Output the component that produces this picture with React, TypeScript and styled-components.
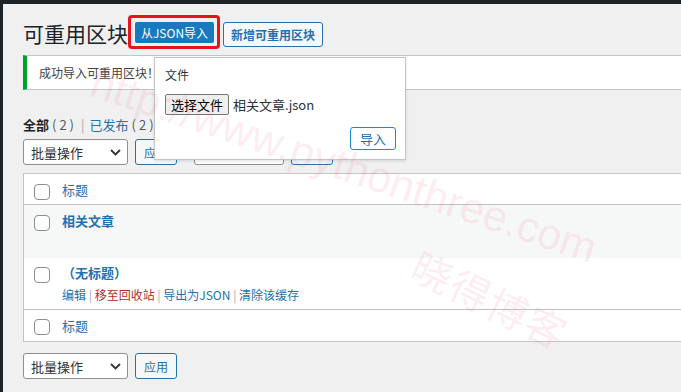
import styled, { createGlobalStyle } from "styled-components";

const GlobalStyle = createGlobalStyle`
  html, body {
    margin: 0;
    padding: 0;
    background: #f0f0f1;
    overflow: hidden;
  }
  body {
    font-family: "Noto Sans CJK SC", "Noto Sans", sans-serif;
    color: #1d2327;
    font-size: 12px;
  }
`;

const Screen = styled.div`
  position: relative;
  width: 681px;
  height: 392px;
  overflow: hidden;
  display: flex;
  flex-direction: column;
`;

const AdminBar = styled.div`
  height: 4px;
  flex: none;
  background: #1d2327;
`;

const Body = styled.div`
  display: flex;
  flex: 1;
`;

const SideStrip = styled.div`
  width: 3px;
  flex: none;
  background: #1d2327;
`;

const Main = styled.main`
  position: relative;
  flex: none;
  width: 740px;
  padding-left: 20px;
`;

const Heading = styled.div`
  display: flex;
  align-items: center;
  margin-top: 11px;
  height: 34px;
`;

const Title = styled.h1`
  margin: 0;
  font-size: 21px;
  font-weight: 400;
  line-height: 1;
  color: #1d2327;
  padding-top: 2px;
`;

const Highlight = styled.span`
  display: inline-flex;
  border: 3px solid #e8141b;
  border-radius: 4px;
  padding: 4px 3px 3px 4px;
`;

const PrimaryButton = styled.button`
  height: 21px;
  width: 79px;
  padding: 0;
  border: none;
  border-radius: 2px;
  background: #1878c0;
  color: #fff;
  font: inherit;
  font-size: 12px;
  line-height: 21px;
`;

const OutlineButton = styled.button<{ $small?: boolean }>`
  height: ${p => (p.$small ? 23 : 25)}px;
  padding: 0 ${p => (p.$small ? 9 : 7)}px;
  margin-top: ${p => (p.$small ? 0 : 5)}px;
  margin-left: ${p => (p.$small ? 0 : 3)}px;
  border: 1px solid ${p => (p.$small ? "#1a8ad0" : "#2271b1")};
  border-radius: 3px;
  background: ${p => (p.$small ? "#fff" : "#f6f7f7")};
  color: #2271b1;
  font: inherit;
  font-size: ${p => (p.$small ? 13 : 12)}px;
  font-weight: ${p => (p.$small ? 400 : 600)};
  line-height: 1;
`;

const Notice = styled.div`
  margin-top: 6px;
  height: 33px;
  display: flex;
  align-items: center;
  background: #fff;
  border: 1px solid #c3c4c7;
  border-left: 4px solid #00a32a;
  padding-left: 12px;
  font-size: 12px;
  color: #3c434a;
`;

const Filters = styled.div`
  margin-top: 24px;
  height: 20px;
  display: flex;
  align-items: center;
  font-size: 13px;
  color: #50575e;
`;

const FilterLink = styled.span<{ $current?: boolean }>`
  color: ${p => (p.$current ? "#1d2327" : "#2271b1")};
  font-weight: ${p => (p.$current ? 600 : 400)};
`;

const Count = styled.span`
  margin: 0 3px;
  letter-spacing: 3px;
`;

const Sep = styled.span`
  color: #a7aaad;
  margin: 0 5px 0 1px;
`;

const TableNav = styled.div<{ $bottom?: boolean }>`
  display: flex;
  gap: 7px;
  margin-top: ${p => (p.$bottom ? 11 : 5)}px;
  height: 26px;
`;

const Select = styled.div<{ $width: number }>`
  width: ${p => p.$width}px;
  box-sizing: border-box;
  height: 26px;
  border: 1px solid #8c8f94;
  border-radius: 3px;
  background: #fff;
  display: flex;
  align-items: center;
  justify-content: space-between;
  padding: 0 6px 0 7px;
  font-size: 13px;
  color: #2c3338;
`;

const ApplyButton = styled.button`
  box-sizing: border-box;
  width: 42px;
  height: 26px;
  border: 1px solid #2271b1;
  border-radius: 3px;
  background: #f6f7f7;
  color: #2271b1;
  font: inherit;
  font-size: 12px;
  padding: 0;
`;

const Group = styled.div`
  display: flex;
  gap: 7px;
  margin-left: 10px;
`;

const Table = styled.table`
  margin-top: 8px;
  width: 100%;
  border-collapse: collapse;
  background: #fff;
  border: 1px solid #c3c4c7;
`;

const Row = styled.tr<{ $alt?: boolean; $head?: boolean }>`
  background: ${p => (p.$alt ? "#f6f7f7" : "#fff")};
  border-bottom: ${p => (p.$head ? "1px solid #c3c4c7" : "none")};
  vertical-align: top;
`;

const CheckCell = styled.td<{ $top: number }>`
  width: 28px;
  padding: ${p => p.$top}px 0 0 10px;
`;

const TitleCell = styled.td<{ $h: number; $top: number }>`
  height: ${p => p.$h}px;
  box-sizing: border-box;
  padding: ${p => p.$top}px 0 0 0;
  font-size: 13px;
  line-height: 18px;
`;

const Checkbox = styled.span`
  display: block;
  width: 14px;
  height: 14px;
  border: 1px solid #8c8f94;
  border-radius: 4px;
  background: #fff;
`;

const ColLink = styled.span`
  color: #2271b1;
  font-size: 13px;
`;

const RowTitle = styled.span`
  color: #2271b1;
  font-weight: 700;
  font-size: 13px;
`;

const Actions = styled.div`
  margin-top: 5px;
  font-size: 12px;
  line-height: 16px;
  color: #a7aaad;
`;

const Action = styled.span<{ $danger?: boolean }>`
  color: ${p => (p.$danger ? "#b32d2e" : "#2271b1")};
`;

const Popup = styled.div`
  position: absolute;
  left: 151px;
  top: 53px;
  width: 252px;
  height: 103px;
  box-sizing: border-box;
  background: #fff;
  border: 1px solid #c3c4c7;
  box-shadow: 0 1px 3px rgba(0, 0, 0, 0.12);
  padding: 8px 9px 9px 10px;
  display: flex;
  flex-direction: column;
`;

const PopLabel = styled.div`
  font-size: 12px;
  line-height: 18px;
  color: #2c3338;
`;

const FileRow = styled.div`
  display: flex;
  align-items: center;
  gap: 4px;
  margin-top: 10px;
  font-size: 13px;
  color: #2c3338;
`;

const FileButton = styled.button`
  height: 21px;
  padding: 0 5px;
  border: 1px solid #767676;
  border-radius: 2px;
  background: #efefef;
  color: #000;
  font: inherit;
  font-size: 13px;
  line-height: 1;
`;

const PopFooter = styled.div`
  margin-top: auto;
  display: flex;
  justify-content: flex-end;
`;

const Watermark = styled.div<{ $left: number; $top: number; $angle: number; $cjk?: boolean }>`
  position: absolute;
  left: ${p => p.$left}px;
  top: ${p => p.$top}px;
  transform: rotate(${p => p.$angle}deg);
  transform-origin: left top;
  white-space: nowrap;
  pointer-events: none;
  font-family: ${p => (p.$cjk ? '"Noto Sans CJK SC", sans-serif' : '"Liberation Sans", sans-serif')};
  font-size: ${p => (p.$cjk ? 40 : 43)}px;
  letter-spacing: ${p => (p.$cjk ? 2 : 0)}px;
  color: rgba(238, 70, 100, 0.11);
`;

const Chevron = () => (
  <svg width="11" height="7" viewBox="0 0 11 7">
    <path d="M1 1l4.5 4.5L10 1" fill="none" stroke="#2c3338" strokeWidth="1.8" />
  </svg>
);

function BulkNav({ bottom }: { bottom?: boolean }) {
  return (
    <TableNav $bottom={bottom}>
      <Select $width={105}>
        批量操作
        <Chevron />
      </Select>
      <ApplyButton>应用</ApplyButton>
      {!bottom && (
        <Group>
          <Select $width={90}>全部日期</Select>
          <ApplyButton>筛选</ApplyButton>
        </Group>
      )}
    </TableNav>
  );
}

export default function App() {
  return (
    <>
      <GlobalStyle />
      <Screen>
        <AdminBar />
        <Body>
          <SideStrip />
          <Main>
            <Heading>
              <Title>可重用区块</Title>
              <Highlight>
                <PrimaryButton>从JSON导入</PrimaryButton>
              </Highlight>
              <OutlineButton>新增可重用区块</OutlineButton>
            </Heading>
            <Notice>成功导入可重用区块！</Notice>
            <Filters>
              <FilterLink $current>全部</FilterLink>
              <Count>(2)</Count>
              <Sep>|</Sep>
              <FilterLink>已发布</FilterLink>
              <Count>(2)</Count>
            </Filters>
            <BulkNav />
            <Table>
              <tbody>
                <Row $head>
                  <CheckCell $top={10}><Checkbox /></CheckCell>
                  <TitleCell $h={31} $top={7}><ColLink>标题</ColLink></TitleCell>
                </Row>
                <Row $alt>
                  <CheckCell $top={10}><Checkbox /></CheckCell>
                  <TitleCell $h={53} $top={7}><RowTitle>相关文章</RowTitle></TitleCell>
                </Row>
                <Row $head>
                  <CheckCell $top={9}><Checkbox /></CheckCell>
                  <TitleCell $h={52} $top={6}>
                    <RowTitle>（无标题）</RowTitle>
                    <Actions>
                      <Action>编辑</Action> | <Action $danger>移至回收站</Action> |{" "}
                      <Action>导出为JSON</Action> | <Action>清除该缓存</Action>
                    </Actions>
                  </TitleCell>
                </Row>
                <Row>
                  <CheckCell $top={9}><Checkbox /></CheckCell>
                  <TitleCell $h={32} $top={7}><ColLink>标题</ColLink></TitleCell>
                </Row>
              </tbody>
            </Table>
            <BulkNav bottom />
            <Popup>
              <PopLabel>文件</PopLabel>
              <FileRow>
                <FileButton>选择文件</FileButton>
                相关文章.json
              </FileRow>
              <PopFooter>
                <OutlineButton $small>导入</OutlineButton>
              </PopFooter>
            </Popup>
          </Main>
        </Body>
        <Watermark $left={100} $top={58} $angle={18.5}>http://www.pythonthree.com</Watermark>
        <Watermark $left={428} $top={236} $angle={26} $cjk>晓得博客</Watermark>
      </Screen>
    </>
  );
}
